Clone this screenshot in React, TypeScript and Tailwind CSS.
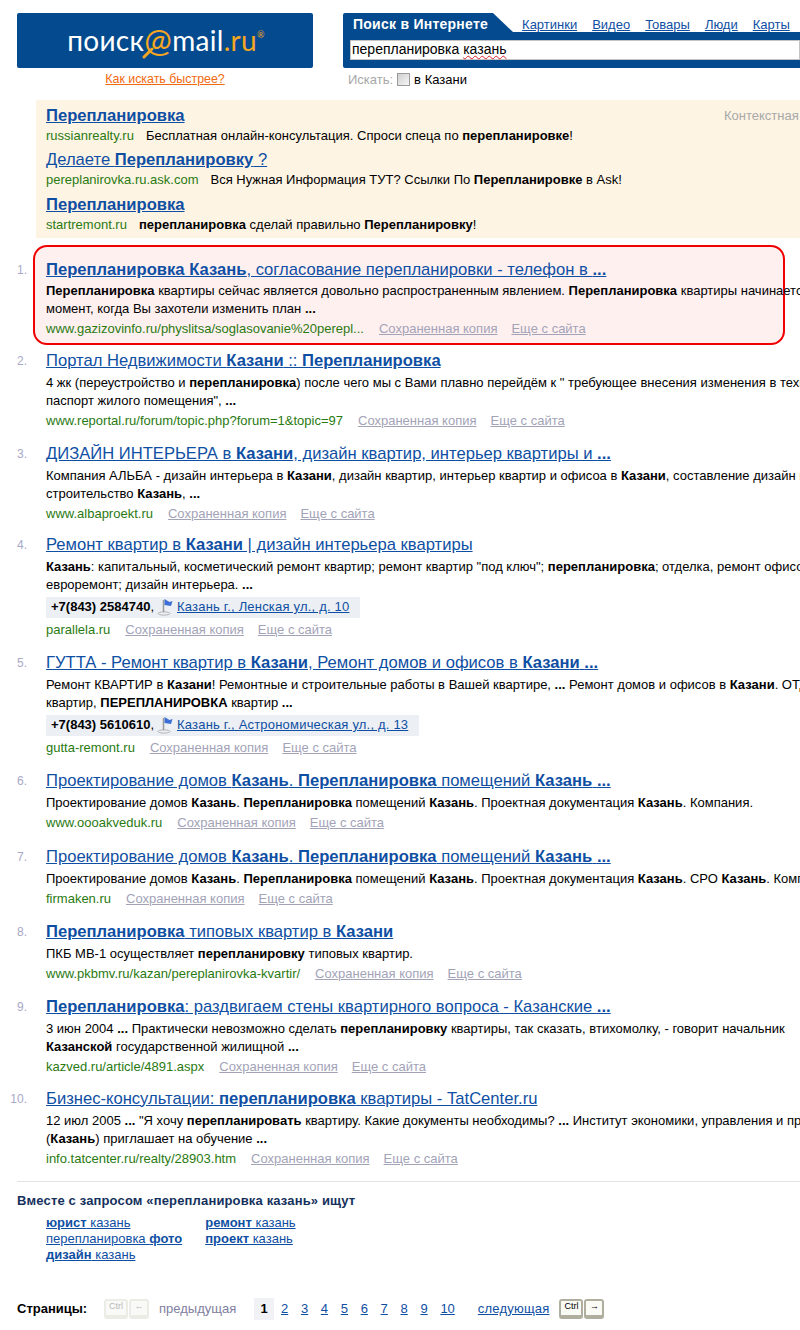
const LINK = "text-[#0f4fa3] underline";

type Piece = string | { b: string };

type ResultItem = {
  n: number;
  title: Piece[];
  lines: Piece[][];
  phone?: string;
  addr?: string;
  url: string;
};

const results: ResultItem[] = [
  {
    n: 2,
    title: ["Портал Недвижимости ", { b: "Казани" }, " :: ", { b: "Перепланировка" }],
    lines: [
      ["4 жк (переустройство и ", { b: "перепланировка" }, ") после чего мы с Вами плавно перейдём к \" требующее внесения изменения в технический"],
      ["паспорт жилого помещения\", ", { b: "..." }],
    ],
    url: "www.reportal.ru/forum/topic.php?forum=1&topic=97",
  },
  {
    n: 3,
    title: ["ДИЗАЙН ИНТЕРЬЕРА в ", { b: "Казани" }, ", дизайн квартир, интерьер квартиры и ", { b: "..." }],
    lines: [
      ["Компания АЛЬБА - дизайн интерьера в ", { b: "Казани" }, ", дизайн квартир, интерьер квартир и офисоа в ", { b: "Казани" }, ", составление дизайн проекта"],
      ["строительство ", { b: "Казань" }, ", ", { b: "..." }],
    ],
    url: "www.albaproekt.ru",
  },
  {
    n: 4,
    title: ["Ремонт квартир в ", { b: "Казани" }, " | дизайн интерьера квартиры"],
    lines: [
      [{ b: "Казань" }, ": капитальный, косметический ремонт квартир; ремонт квартир \"под ключ\"; ", { b: "перепланировка" }, "; отделка, ремонт офисов"],
      ["евроремонт; дизайн интерьера. ", { b: "..." }],
    ],
    phone: "+7(843) 2584740",
    addr: "Казань г., Ленская ул., д. 10",
    url: "parallela.ru",
  },
  {
    n: 5,
    title: ["ГУТТА - Ремонт квартир в ", { b: "Казани" }, ", Ремонт домов и офисов в ", { b: "Казани" }, " ", { b: "..." }],
    lines: [
      ["Ремонт КВАРТИР в ", { b: "Казани" }, "! Ремонтные и строительные работы в Вашей квартире, ", { b: "..." }, " Ремонт домов и офисов в ", { b: "Казани" }, ". ОТДЕЛКА"],
      ["квартир, ", { b: "ПЕРЕПЛАНИРОВКА" }, " квартир ", { b: "..." }],
    ],
    phone: "+7(843) 5610610",
    addr: "Казань г., Астрономическая ул., д. 13",
    url: "gutta-remont.ru",
  },
  {
    n: 6,
    title: ["Проектирование домов ", { b: "Казань" }, ". ", { b: "Перепланировка" }, " помещений ", { b: "Казань" }, " ", { b: "..." }],
    lines: [["Проектирование домов ", { b: "Казань" }, ". ", { b: "Перепланировка" }, " помещений ", { b: "Казань" }, ". Проектная документация ", { b: "Казань" }, ". Компания."]],
    url: "www.oooakveduk.ru",
  },
  {
    n: 7,
    title: ["Проектирование домов ", { b: "Казань" }, ". ", { b: "Перепланировка" }, " помещений ", { b: "Казань" }, " ", { b: "..." }],
    lines: [["Проектирование домов ", { b: "Казань" }, ". ", { b: "Перепланировка" }, " помещений ", { b: "Казань" }, ". Проектная документация ", { b: "Казань" }, ". СРО ", { b: "Казань" }, ". Компания"]],
    url: "firmaken.ru",
  },
  {
    n: 8,
    title: [{ b: "Перепланировка" }, " типовых квартир в ", { b: "Казани" }],
    lines: [["ПКБ МВ-1 осуществляет ", { b: "перепланировку" }, " типовых квартир."]],
    url: "www.pkbmv.ru/kazan/pereplanirovka-kvartir/",
  },
  {
    n: 9,
    title: [{ b: "Перепланировка" }, ": раздвигаем стены квартирного вопроса - Казанские ", { b: "..." }],
    lines: [
      ["3 июн 2004 ", { b: "..." }, " Практически невозможно сделать ", { b: "перепланировку" }, " квартиры, так сказать, втихомолку, - говорит начальник"],
      [{ b: "Казанской" }, " государственной жилищной ", { b: "..." }],
    ],
    url: "kazved.ru/article/4891.aspx",
  },
  {
    n: 10,
    title: ["Бизнес-консультации: ", { b: "перепланировка" }, " квартиры - TatCenter.ru"],
    lines: [
      ["12 июл 2005 ", { b: "..." }, " \"Я хочу ", { b: "перепланировать" }, " квартиру. Какие документы необходимы? ", { b: "..." }, " Институт экономики, управления и права"],
      ["(", { b: "Казань" }, ") приглашает на обучение ", { b: "..." }],
    ],
    url: "info.tatcenter.ru/realty/28903.htm",
  },
];

const ads: { title: Piece[]; url: string; text: Piece[] }[] = [
  {
    title: [{ b: "Перепланировка" }],
    url: "russianrealty.ru",
    text: ["Бесплатная онлайн-консультация. Спроси спеца по ", { b: "перепланировке" }, "!"],
  },
  {
    title: ["Делаете ", { b: "Перепланировку" }, " ?"],
    url: "pereplanirovka.ru.ask.com",
    text: ["Вся Нужная Информация ТУТ? Ссылки По ", { b: "Перепланировке" }, " в Ask!"],
  },
  {
    title: [{ b: "Перепланировка" }],
    url: "startremont.ru",
    text: [{ b: "перепланировка" }, " сделай правильно ", { b: "Перепланировку" }, "!"],
  },
];

const Rich = ({ parts }: { parts: Piece[] }) => (
  <>
    {parts.map((p, i) => (typeof p === "string" ? <span key={i}>{p}</span> : <b key={i}>{p.b}</b>))}
  </>
);

const FlagIcon = () => (
  <svg width="17" height="18" viewBox="0 0 17 18" className="mx-[3px] shrink-0">
    <ellipse cx="7" cy="15.5" rx="6" ry="1.6" fill="none" stroke="#b4b4b4" />
    <path d="M6.5 2v12" stroke="#9a9a9a" strokeWidth="1.5" />
    <path d="M7.5 1l5 3 3-1-1.5 5-6.5-1z" fill="#3d6fd6" />
  </svg>
);

const ResultMeta = ({ url }: { url: string }) => (
  <div className="flex h-[20px] items-center gap-[15px] pt-[2px] text-[13px]">
    <span className="text-[#2a7a12]">{url}</span>
    <a className="text-[#a3a3b8] underline">Сохраненная копия</a>
    <a className="-ml-[1px] text-[#a3a3b8] underline">Еще с сайта</a>
  </div>
);

const Num = ({ n }: { n: number }) => (
  <div className="w-[27px] shrink-0 text-right text-[12px] leading-[20px] text-[#a8a8c8]">{n}.</div>
);

// небольшие поправки шага между выдачами
const offsets: Record<number, string> = {
  3: "-mb-[2px]",
  6: "mb-[1px]",
  9: "-mb-[1px]",
};

const Result = ({ item }: { item: ResultItem }) => (
  <div className={`flex h-fit gap-[19px] ${offsets[item.n] ?? ""}`}>
    <Num n={item.n} />
    <div>
      <a className={`block h-[23px] text-[16.6px] leading-[20px] ${LINK}`}>
        <Rich parts={item.title} />
      </a>
      {item.lines.map((l, i) => (
        <p key={i} className="h-[18px] text-[13px] leading-[18px] text-black">
          <Rich parts={l} />
        </p>
      ))}
      {item.phone && (
        <div className="mt-[3px] mb-[1px] flex h-[21px] w-fit items-center bg-[#eceff4] pl-[5px] pr-[11px] text-[13px]">
          <b>{item.phone}</b>,
          <FlagIcon />
          <a className={`tracking-[0.2px] ${LINK}`}>{item.addr}</a>
        </div>
      )}
      <ResultMeta url={item.url} />
    </div>
  </div>
);

const Key = ({ label, active, wide }: { label: string; active?: boolean; wide?: boolean }) => (
  <div
    className={`flex h-[20px] items-start justify-center rounded-[3px] border-x-2 border-t-2 border-b-[4px] text-[9px] leading-[11px] ${wide ? "w-[24px]" : "w-[20px]"} ${
      active ? "border-[#b0af9f] bg-[#fbfbf6] text-black" : "border-[#ecece6] bg-[#f9f9f7] text-[#b8b8b8]"
    }`}
  >
    {label}
  </div>
);

export default function App() {
  return (
    <div className="h-[1330px] w-[800px] overflow-hidden whitespace-nowrap bg-white font-['Liberation_Sans',Arial,sans-serif] text-[13px] text-black">
      {/* header */}
      <div className="flex pl-[17px] pt-[13px]">
        <div className="w-[296px]">
          <div className="flex h-[55px] items-center justify-center rounded-[2px] bg-[#034a8e] pb-[2px] pl-[2px] font-['Lato',sans-serif] text-[28px] font-normal tracking-[0.3px] text-white">
            <span>поиск</span>
            <span className="relative text-[33px] leading-none text-[#f5a623]">
              @
              <svg width="12" height="12" viewBox="0 0 12 12" className="absolute bottom-[-3px] left-[-2px]">
                <path d="M10 2L2 10" stroke="#f5a623" strokeWidth="3" strokeLinecap="round" />
              </svg>
            </span>
            <span>mail</span>
            <span className="text-[#f5a623]">.ru</span>
            <span className="mb-[10px] text-[9px] text-[#f5a623]">®</span>
          </div>
          <div className="mt-[2px] text-center text-[12.4px] leading-[18px]">
            <a className="text-[#f26a0f] underline">Как искать быстрее?</a>
          </div>
        </div>
        <div className="ml-[30px] flex-1">
          <div className="flex h-[19px] items-end">
            <div className="h-[19px] rounded-tl-[2px] bg-[#034a8e] pl-[10px] pr-[5px] text-[14px] leading-[22px] font-bold tracking-[0.25px] text-white">
              Поиск в Интернете
            </div>
            <svg width="20" height="19" viewBox="0 0 20 19" className="shrink-0">
              <path d="M0 0L20 19H0z" fill="#034a8e" />
            </svg>
            <div className="-mb-[2px] flex gap-[15px] pl-[9px] text-[13px] leading-[18px]">
              {["Картинки", "Видео", "Товары", "Люди", "Карты"].map((t) => (
                <a key={t} className={LINK}>
                  {t}
                </a>
              ))}
            </div>
          </div>
          <div className="h-[36px] rounded-bl-[2px] bg-[#034a8e] pl-[7px] pt-[8px]">
            <div className="h-[20px] border border-[#c4c4c4] bg-white pl-[1px] text-[14px] leading-[17px]">
              перепланировка <span className="underline decoration-[#e0202a] decoration-wavy decoration-1">казань</span>
            </div>
          </div>
          <div className="mt-[2px] flex items-center pl-[5px] text-[13px]">
            <span className="text-[#a8a8a8]">Искать:</span>
            <span className="mx-[4px] h-[13px] w-[13px] border border-[#9a9a9a] bg-[linear-gradient(135deg,#cfcfcf,#f6f6f6)]" />
            <span>в Казани</span>
          </div>
        </div>
      </div>

      {/* ads */}
      <div className="relative ml-[36px] mt-[10px] h-[138px] bg-[#fef4e4] pl-[10px] pt-[6px]">
        <span className="absolute left-[688px] top-[6px] text-[13px] text-[#a8a8a8]">Контекстная реклама</span>
        {ads.map((ad, i) => (
          <div key={i} className="h-[44.5px]">
            <a className={`block h-[21px] text-[16.6px] leading-[20px] ${LINK}`}>
              <Rich parts={ad.title} />
            </a>
            <div className="flex h-[18px] gap-[12px] text-[13px] leading-[18px]">
              <span className="text-[#2a7a12]">{ad.url}</span>
              <span>
                <Rich parts={ad.text} />
              </span>
            </div>
          </div>
        ))}
      </div>

      {/* results */}
      <div className="mt-[7px] flex flex-col gap-[14px]">
        <div className="-mb-[8px] flex">
          <div className="pt-[15px]">
            <Num n={1} />
          </div>
          <div className="ml-[6px] h-[100px] w-[752px] rounded-[14px] border-2 border-[#f00000] bg-[#fff0f0] pl-[11px] pt-[13px]">
            <a className={`block h-[22px] text-[16.6px] leading-[20px] ${LINK}`}>
              <b>Перепланировка Казань</b>, согласование перепланировки - телефон в <b>...</b>
            </a>
            <p className="h-[18px] text-[13px] leading-[18px]">
              <b>Перепланировка</b> квартиры сейчас является довольно распространенным явлением. <b>Перепланировка</b> квартиры начинается в тот
            </p>
            <p className="h-[18px] text-[13px] leading-[18px]">
              момент, когда Вы захотели изменить план <b>...</b>
            </p>
            <ResultMeta url="www.gazizovinfo.ru/physlitsa/soglasovanie%20perepl..." />
          </div>
        </div>
        {results.map((r) => (
          <Result key={r.n} item={r} />
        ))}
      </div>

      {/* related */}
      <div className="ml-[17px] mt-[13px] border-t border-[#e4e4e4] pt-[10px]">
        <div className="text-[13px] leading-[18px] font-bold tracking-[0.15px] text-[#14305c]">Вместе с запросом «перепланировка казань» ищут</div>
        <div className="ml-[29px] mt-[5px] flex gap-[23px] text-[13px] leading-[16px]">
          <div className="flex flex-col">
            <a className={LINK}><b>юрист</b> казань</a>
            <a className={LINK}>перепланировка <b>фото</b></a>
            <a className={LINK}><b>дизайн</b> казань</a>
          </div>
          <div className="flex flex-col">
            <a className={LINK}><b>ремонт</b> казань</a>
            <a className={LINK}><b>проект</b> казань</a>
          </div>
        </div>
      </div>

      {/* pager */}
      <div className="ml-[17px] mt-[34px] flex h-[24px] items-center text-[13px]">
        <b className="w-[87px]">Страницы:</b>
        <div className="flex gap-[1px]">
          <Key label="Ctrl" wide />
          <Key label="←" />
        </div>
        <span className="ml-[10px] w-[95px] text-[#8080a0]">предыдущая</span>
        <span className="flex h-[22px] w-[20px] items-center justify-center bg-[#f1f2f6] font-bold">1</span>
        <div className="ml-[7px] flex gap-[12.7px]">
          {[2, 3, 4, 5, 6, 7, 8, 9, 10].map((p) => (
            <a key={p} className={LINK}>
              {p}
            </a>
          ))}
        </div>
        <a className={`ml-[23px] tracking-[0.2px] ${LINK}`}>следующая</a>
        <div className="ml-[10px] flex gap-[1px]">
          <Key label="Ctrl" active wide />
          <Key label="→" active />
        </div>
      </div>
    </div>
  );
}
